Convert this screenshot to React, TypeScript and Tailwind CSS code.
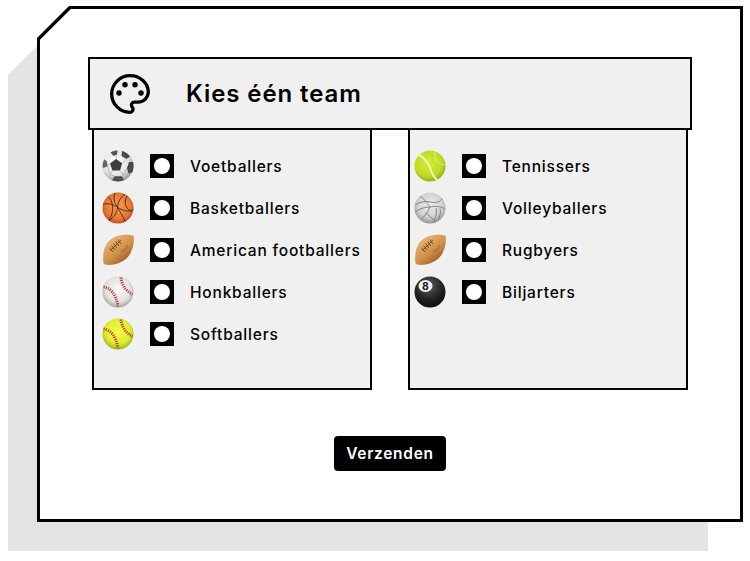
const font = "font-['Inter','Liberation_Sans',sans-serif]";

function Soccer() {
  return (
    <svg viewBox="0 0 32 32" className="w-8 h-8">
      <defs>
        <radialGradient id="soc" cx="42%" cy="38%" r="62%">
          <stop offset="0%" stopColor="#ffffff" />
          <stop offset="65%" stopColor="#e6e6e6" />
          <stop offset="100%" stopColor="#a0a0a0" />
        </radialGradient>
      </defs>
      <circle cx="16" cy="16" r="15.500" fill="url(#soc)" />
      <path d="M14 9l6.200 4.200-2.200 7.300h-7.600l-2.400-7z" fill="#3d3d3d" />
      <path d="M8.500 2.500C11 1 14 .5 15.500 .6l-.5 3.900-3.500 1.500z" fill="#555" />
      <path d="M20 1c3 .7 6 2.700 8 5.500l-3.500 2.500-5-3z" fill="#4a4a4a" />
      <path d="M.8 18c-.5-3 0-6 1.500-8.800l2.700 2.300.5 5z" fill="#666" />
      <path d="M31.200 12c.5 3 .5 7-.8 10.300l-3.900 1.200-1.500-5.500 2-6z" fill="#4a4a4a" />
      <path d="M10 30.300c3.500 1.500 8.500 1.500 12 0l-2-4h-7.500z" fill="#505050" />
      <path d="M14 9l1-4.500M7.800 13.500L5.500 16.500M20.200 13.200l4.300-4.200M18 20.500l3 4M10.400 20.500L8 24.500M5.500 16.500L8 24.500l4.500 1.800M25 18l-4 6.500-1 1.800" fill="none" stroke="#9a9a9a" strokeWidth="0.600" />
    </svg>
  );
}

function Basketball() {
  return (
    <svg viewBox="0 0 32 32" className="w-8 h-8">
      <defs>
        <radialGradient id="bas" cx="50%" cy="45%" r="58%">
          <stop offset="0%" stopColor="#f59a52" />
          <stop offset="70%" stopColor="#e9772e" />
          <stop offset="100%" stopColor="#ad4a22" />
        </radialGradient>
      </defs>
      <circle cx="16" cy="16" r="15.500" fill="url(#bas)" />
      <g fill="none" stroke="#3f2a22" strokeWidth="0.900">
        <path d="M13 .9c-1.500 4-1.500 8 1.500 13s7 11 8.500 15.500" />
        <path d="M1 12.500c5-2 10 0 15 3s10 5 15.300 2" />
        <path d="M6 4.500c5 4.500 7 13.500 1 24" />
        <path d="M23 2.400c-4 2-7 7-7.500 13.100s-4 10-8.500 13" />
        <path d="M25 4c-3 5.500-2 10.500 1.500 13.500l3 2.300" />
      </g>
    </svg>
  );
}

function Football() {
  return (
    <svg viewBox="0 0 32 32" className="w-8 h-8">
      <defs>
        <linearGradient id="foo" x1="0.150" y1="0.150" x2="0.750" y2="0.900">
          <stop offset="0%" stopColor="#e8b676" />
          <stop offset="55%" stopColor="#d2934a" />
          <stop offset="100%" stopColor="#9c5e22" />
        </linearGradient>
      </defs>
      <path d="M31 1.500C25 -.2 14 .5 7.500 6.500 1.500 12 .5 22 1.500 29c.1 1 .5 1.400 1.500 1.500C9 31.800 18.500 30 25 24 31 18.300 32.300 8 31.800 3 31.700 2 31.500 1.700 31 1.500z" fill="url(#foo)" />
      <g fill="none" stroke="#7a4a1c" strokeWidth="1">
        <path d="M8.500 16.500L19 5.800" />
        <path d="M7.500 13.500l3.500 4.500M9.500 11.500l3.500 4.500M11.500 9.500l3.500 4.500M13.500 7.500l3.500 4.500M15.700 5.500l3.300 4.300" />
        <path d="M19 17c3.500.5 6-2 6.500-6" strokeWidth="0.500" />
      </g>
    </svg>
  );
}

function Baseball() {
  return (
    <svg viewBox="0 0 32 32" className="w-8 h-8">
      <defs>
        <radialGradient id="bbl" cx="50%" cy="42%" r="60%">
          <stop offset="0%" stopColor="#fafafa" />
          <stop offset="65%" stopColor="#e6e3e1" />
          <stop offset="100%" stopColor="#a8a09c" />
        </radialGradient>
      </defs>
      <circle cx="16" cy="16" r="15.500" fill="url(#bbl)" />
      <g fill="none" stroke="#b8433d" strokeDasharray="1.200 1.100" strokeWidth="3">
        <path d="M1.500 11c6 .5 12.500 6 14.500 19.500" />
        <path d="M19 1.500c.5 7 4 12.500 11.500 17" />
      </g>
    </svg>
  );
}

function Softball() {
  return (
    <svg viewBox="0 0 32 32" className="w-8 h-8">
      <defs>
        <radialGradient id="sof" cx="50%" cy="42%" r="60%">
          <stop offset="0%" stopColor="#f8f84a" />
          <stop offset="65%" stopColor="#e0ee30" />
          <stop offset="100%" stopColor="#98b21a" />
        </radialGradient>
      </defs>
      <circle cx="16" cy="16" r="15.500" fill="url(#sof)" />
      <g fill="none" stroke="#b8433d" strokeDasharray="1.200 1.100" strokeWidth="3">
        <path d="M1.500 11c6 .5 12.500 6 14.500 19.500" />
        <path d="M19 1.500c.5 7 4 12.500 11.500 17" />
      </g>
    </svg>
  );
}

function Tennis() {
  return (
    <svg viewBox="0 0 32 32" className="w-8 h-8">
      <defs>
        <radialGradient id="ten" cx="45%" cy="40%" r="62%">
          <stop offset="0%" stopColor="#d6ec33" />
          <stop offset="70%" stopColor="#bddc22" />
          <stop offset="100%" stopColor="#8aad14" />
        </radialGradient>
      </defs>
      <circle cx="16" cy="16" r="15.500" fill="url(#ten)" />
      <path d="M5 5c6 3 9.500 8.500 11.500 14 1.300 4 3 8 6.500 10.800" fill="none" stroke="#eef5c0" strokeWidth="2" />
      <path d="M21 1.500c-1 5.500 1 9.500 4 11.500 2 1.500 4 2 6.300 2" fill="none" stroke="#eef4b0" strokeWidth="1.200" opacity="0.500" />
    </svg>
  );
}

function Volleyball() {
  return (
    <svg viewBox="0 0 32 32" className="w-8 h-8">
      <defs>
        <radialGradient id="vol" cx="50%" cy="40%" r="60%">
          <stop offset="0%" stopColor="#ececec" />
          <stop offset="65%" stopColor="#d2d2d2" />
          <stop offset="100%" stopColor="#989898" />
        </radialGradient>
      </defs>
      <circle cx="16" cy="16" r="15.500" fill="url(#vol)" />
      <g fill="none" stroke="#7c7c7c" strokeWidth="0.900">
        <path d="M16 15C13 10 9 6 6 4.500M16 15c5-1 10-1 15 2M16 15c-2 5-6 10-9 12.500" />
        <path d="M1.500 13c4-3 9-4 14.500-3s9 1 12-3M1 20c4-3 9.500-5 15-5M22 16c1 5 0 10-3 15M26 16.500c1 4 0 8-2 12M11.500 21c3 2 7 5 10 8.500" />
      </g>
    </svg>
  );
}

function EightBall() {
  return (
    <svg viewBox="0 0 32 32" className="w-8 h-8">
      <defs>
        <radialGradient id="eig" cx="45%" cy="30%" r="75%">
          <stop offset="0%" stopColor="#5a5a5a" />
          <stop offset="60%" stopColor="#222222" />
          <stop offset="100%" stopColor="#0a0a0a" />
        </radialGradient>
      </defs>
      <circle cx="16" cy="16" r="15.500" fill="url(#eig)" />
      <ellipse cx="11.500" cy="10" rx="7" ry="6" fill="#f2f2f2" />
      <text x="11.500" y="13.800" textAnchor="middle" fontSize="10.500" fontWeight="700" fill="#222" fontFamily="Inter, sans-serif">8</text>
    </svg>
  );
}

function Row({ icon, label }: { icon: React.ReactNode; label: string }) {
  return (
    <div className="flex items-center h-[42px]">
      <div className="w-8 h-8 mr-[16px]">{icon}</div>
      <div className="w-6 h-6 bg-black flex items-center justify-center mr-4">
        <div className="w-4 h-4 rounded-full bg-white" />
      </div>
      <span className="pt-[2px] text-[15.500px] font-medium text-black tracking-[0.800px] whitespace-nowrap">{label}</span>
    </div>
  );
}

const left = [
  { icon: <Soccer />, label: "Voetballers" },
  { icon: <Basketball />, label: "Basketballers" },
  { icon: <Football />, label: "American footballers" },
  { icon: <Baseball />, label: "Honkballers" },
  { icon: <Softball />, label: "Softballers" },
];

const right = [
  { icon: <Tennis />, label: "Tennissers" },
  { icon: <Volleyball />, label: "Volleyballers" },
  { icon: <Football />, label: "Rugbyers" },
  { icon: <EightBall />, label: "Biljarters" },
];

export default function App() {
  return (
    <div className={`relative w-[750px] h-[561px] bg-white overflow-hidden ${font}`}>
      {/* shadow */}
      <div className="absolute left-2 top-[45px] w-[700px] h-[506px] bg-[#e4e4e4] [clip-path:polygon(30px_0,100%_0,100%_100%,0_100%,0_30px)]" />

      <div className="absolute left-[37px] top-[6px] w-[706px] h-[516px] bg-black [clip-path:polygon(32px_0,100%_0,100%_100%,0_100%,0_32px)] p-[3px]">
        <div className="w-full h-full bg-white [clip-path:polygon(30.800px_0,100%_0,100%_100%,0_100%,0_30.800px)] pt-[48px] pl-[48px]">
          <div className="w-[604px] h-[73px] relative z-10 bg-[#f0f0f0] border-2 border-black flex items-center pl-[18px]">
            <svg viewBox="0 0 24 24" className="w-11 h-11" fill="none" stroke="black" strokeWidth="1.800" strokeLinecap="round" strokeLinejoin="round">
              <path d="M12 2C6.500 2 2 6.500 2 12s4.500 10 10 10c.926 0 1.648-.746 1.648-1.688 0-.437-.18-.835-.437-1.125-.29-.289-.438-.652-.438-1.125a1.640 1.640 0 0 1 1.668-1.668h1.996c3.051 0 5.555-2.503 5.555-5.554C21.965 6.012 17.461 2 12 2z" />
              <circle cx="6" cy="11.450" r="1.500" fill="black" stroke="none" />
              <circle cx="9.270" cy="6.930" r="1.500" fill="black" stroke="none" />
              <circle cx="14.730" cy="6.930" r="1.500" fill="black" stroke="none" />
              <circle cx="18" cy="11.450" r="1.500" fill="black" stroke="none" />
            </svg>
            <h1 className="ml-[34px] text-[24px] font-semibold text-black tracking-[0.900px]">Kies één team</h1>
          </div>
          <div className="flex gap-[36px] pl-[4px] -mt-px">
            <div className="w-[280px] h-[261px] bg-[#f0f0f0] border-2 border-black border-t-0 pl-[8px] pt-[16px]">
              {left.map((r) => (
                <Row key={r.label} icon={r.icon} label={r.label} />
              ))}
            </div>
            <div className="w-[280px] h-[261px] bg-[#f0f0f0] border-2 border-black border-t-0 pl-[4px] pt-[16px]">
              {right.map((r) => (
                <Row key={r.label} icon={r.icon} label={r.label} />
              ))}
            </div>
          </div>
          <div className="w-[604px] flex justify-center mt-[46px]">
            <button className="h-[35px] w-[112px] bg-black text-white text-[15.500px] font-semibold rounded-[4px] tracking-[0.700px]">Verzenden</button>
          </div>
        </div>
      </div>
    </div>
  );
}
